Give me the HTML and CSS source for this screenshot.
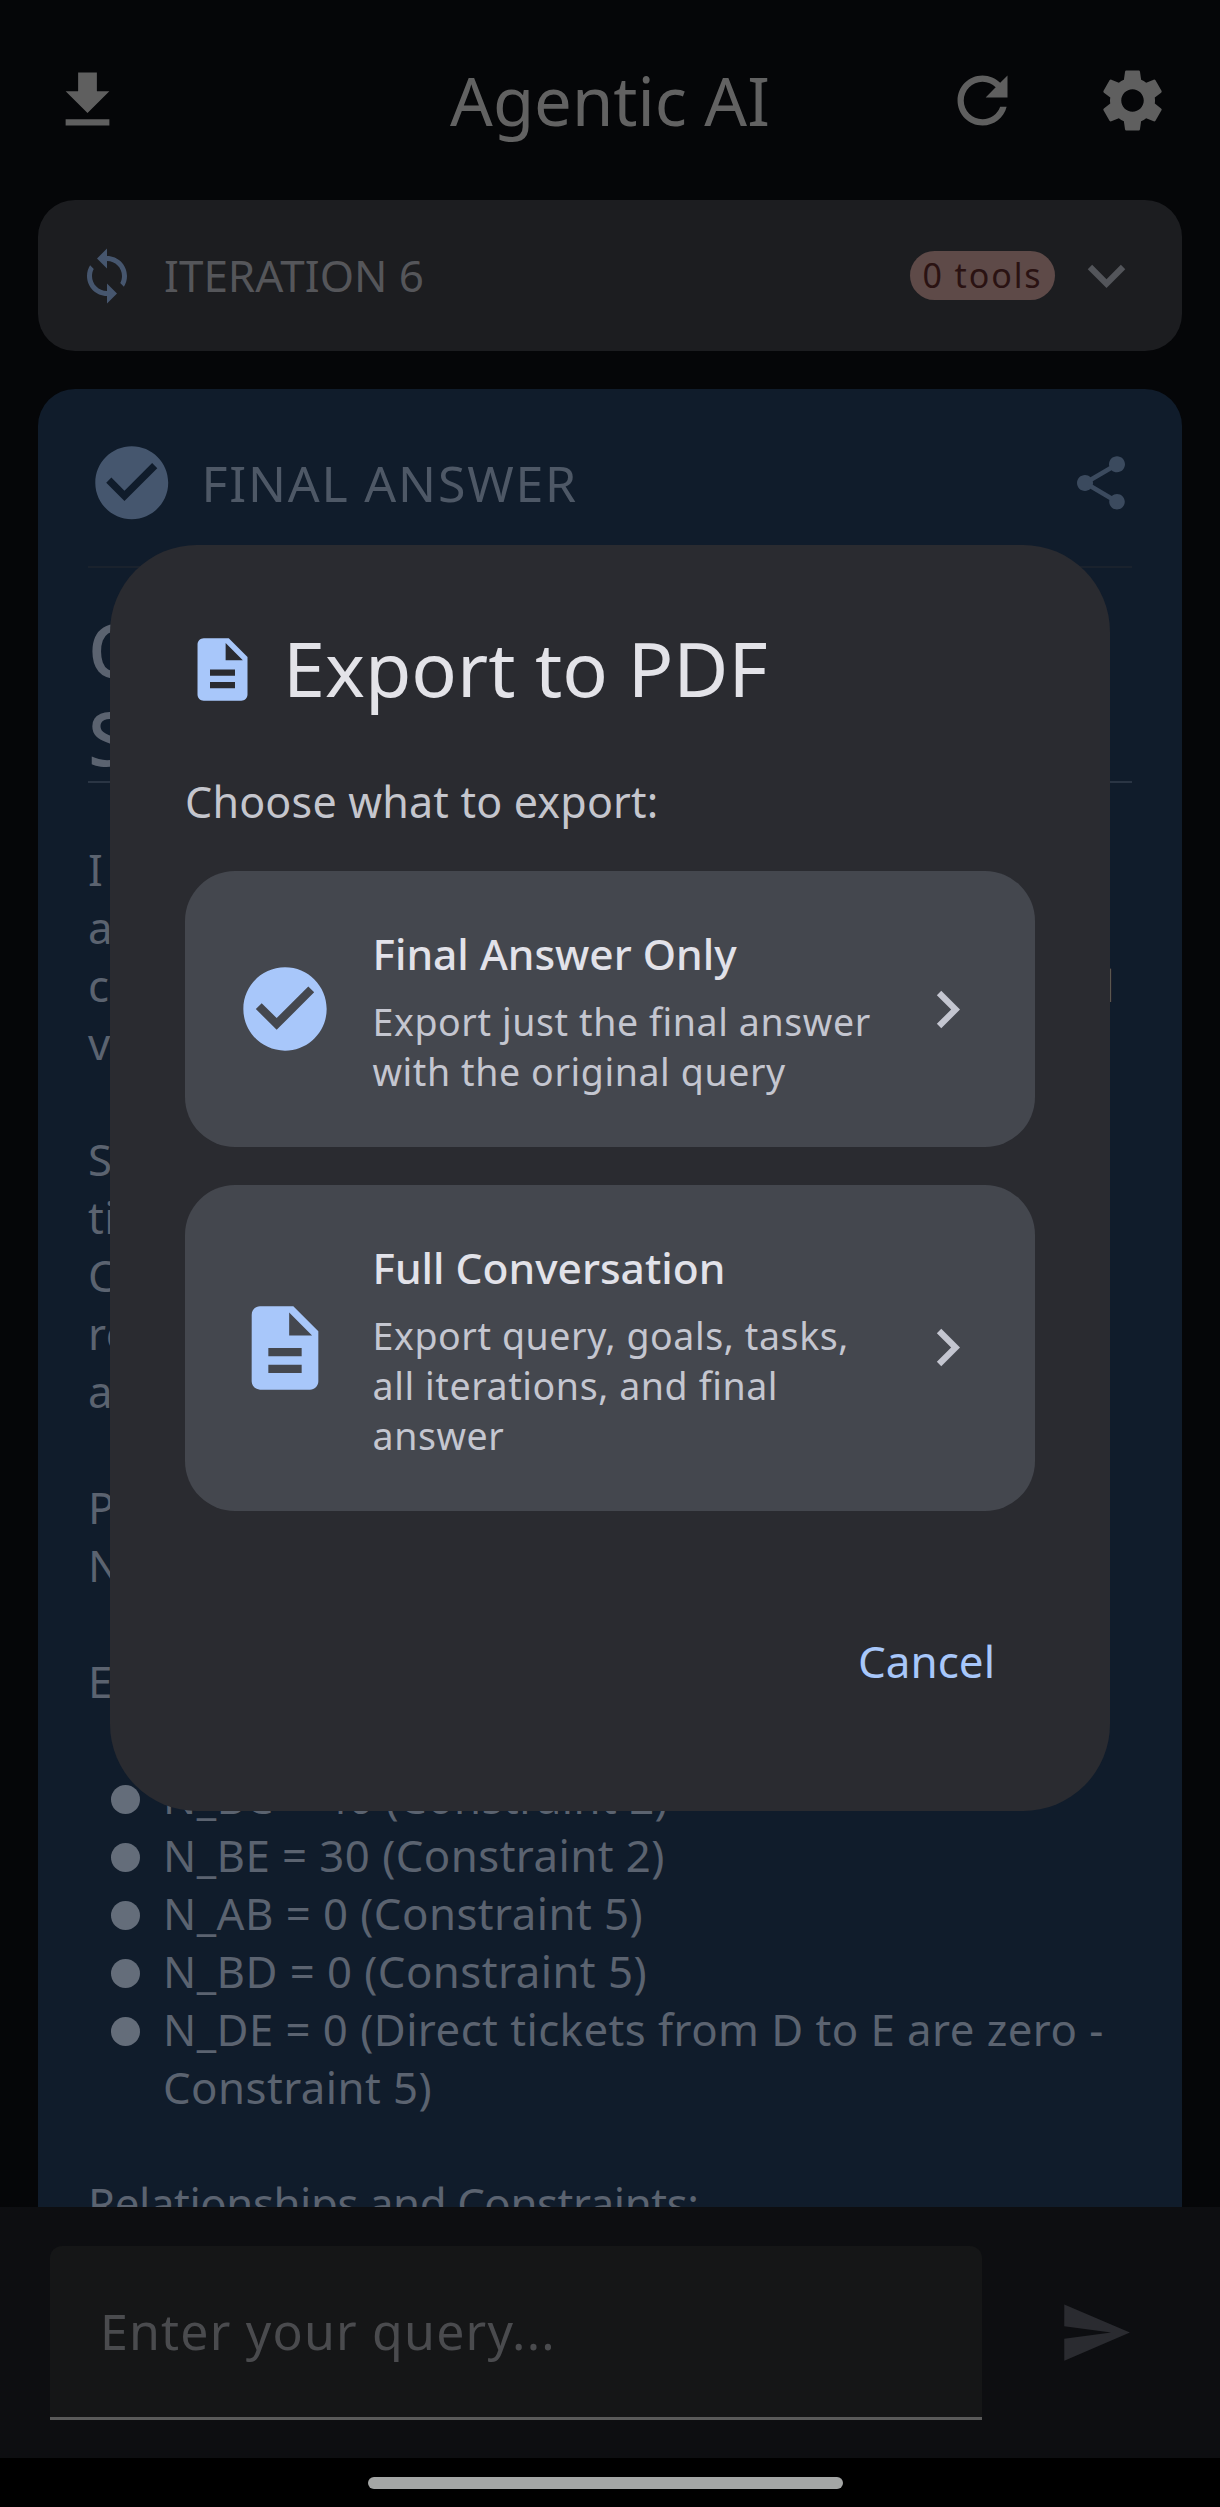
FILE: index.html
```html
<!DOCTYPE html>
<html lang="en">
<head>
<meta charset="utf-8">
<title>Agentic AI</title>
<link rel="stylesheet" href="styles.css">
</head>
<body>
<div class="screen">
  <main class="content">
    <header class="appbar">
      <div class="appbar-side">
        <svg class="icon-75 ic-head" viewBox="0 0 24 24"><path d="M19 9h-4V3H9v6H5l7 7 7-7zM5 18v2h14v-2H5z"/></svg>
      </div>
      <h1 class="app-title">Agentic AI</h1>
      <div class="appbar-side appbar-right">
        <svg class="icon-75 ic-head" viewBox="0 0 24 24"><path d="M17.65 6.35C16.2 4.9 14.21 4 12 4c-4.42 0-7.99 3.58-7.99 8s3.57 8 7.99 8c3.73 0 6.84-2.55 7.73-6h-2.08c-.82 2.33-3.04 4-5.65 4-3.31 0-6-2.69-6-6s2.69-6 6-6c1.66 0 3.14.69 4.22 1.78L13 11h7V4l-2.35 2.35z"/></svg>
        <svg class="icon-75 ic-head" viewBox="0 0 24 24"><path d="M19.14 12.94c.04-.3.06-.61.06-.94 0-.32-.02-.64-.07-.94l2.03-1.58c.18-.14.23-.41.12-.61l-1.92-3.32c-.12-.22-.37-.29-.59-.22l-2.39.96c-.5-.38-1.03-.7-1.62-.94l-.36-2.54c-.04-.24-.24-.41-.48-.41h-3.84c-.24 0-.43.17-.47.41l-.36 2.54c-.59.24-1.13.57-1.62.94l-2.39-.96c-.22-.08-.47 0-.59.22L2.74 8.87c-.12.21-.08.47.12.61l2.03 1.58c-.05.3-.09.63-.09.94s.02.64.07.94l-2.03 1.58c-.18.14-.23.41-.12.61l1.92 3.32c.12.22.37.29.59.22l2.39-.96c.5.38 1.03.7 1.62.94l.36 2.54c.05.24.24.41.48.41h3.84c.24 0 .44-.17.47-.41l.36-2.54c.59-.24 1.13-.56 1.62-.94l2.39.96c.22.08.47 0 .59-.22l1.92-3.32c.12-.22.07-.47-.12-.61l-2.01-1.58zM12 15.6c-1.98 0-3.6-1.62-3.6-3.6s1.62-3.6 3.6-3.6 3.6 1.62 3.6 3.6-1.62 3.6-3.6 3.6z"/></svg>
      </div>
    </header>

    <section class="iter-card">
      <svg class="icon-sync" viewBox="0 0 24 24"><path d="M12 4V1L8 5l4 4V6c3.31 0 6 2.69 6 6 0 1.01-.25 1.97-.7 2.8l1.46 1.46C19.54 15.03 20 13.57 20 12c0-4.42-3.58-8-8-8zm0 14c-3.31 0-6-2.69-6-6 0-1.01.25-1.97.7-2.8L5.24 7.74C4.46 8.97 4 10.43 4 12c0 4.42 3.58 8 8 8v3l4-4-4-4v3z"/></svg>
      <span class="iter-label">ITERATION 6</span>
      <span class="tools-pill">0 tools</span>
      <svg class="icon-75 ic-chev" viewBox="0 0 24 24"><path d="M16.59 8.59 12 13.17 7.41 8.59 6 10l6 6 6-6z"/></svg>
    </section>

    <section class="answer-card">
      <div class="answer-head">
        <svg class="icon-check" viewBox="0 0 24 24"><path d="M12 2C6.48 2 2 6.48 2 12s4.48 10 10 10 10-4.48 10-10S17.52 2 12 2zm-2 15l-5-5 1.41-1.41L10 14.17l7.59-7.59L19 8l-9 9z"/></svg>
        <span class="answer-label">FINAL ANSWER</span>
        <svg class="icon-share" viewBox="0 0 24 24"><path d="M18 16.08c-.76 0-1.44.3-1.96.77L8.91 12.7c.05-.23.09-.46.09-.7s-.04-.47-.09-.7l7.05-4.11c.54.5 1.25.81 2.04.81 1.66 0 3-1.34 3-3s-1.34-3-3-3-3 1.34-3 3c0 .24.04.47.09.7L8.04 9.81C7.5 9.31 6.79 9 6 9c-1.66 0-3 1.34-3 3s1.34 3 3 3c.79 0 1.5-.31 2.04-.81l7.12 4.16c-.05.21-.08.43-.08.65 0 1.61 1.31 2.92 2.92 2.92 1.61 0 2.92-1.31 2.92-2.92s-1.31-2.92-2.92-2.92z"/></svg>
      </div>
      <div class="rule-dark"></div>
      <h2 class="answer-title">O<br>S</h2>
      <div class="rule-light"></div>
      <div class="answer-body">
        <p class="para">I<br>a<br><span class="split-line"><span>c</span><span>l</span></span>v</p>
        <p class="para">S<br>ti<br>C<br>re<br>a</p>
        <p class="para">P<br>N</p>
        <p class="para">E</p>
        <ul class="bullets">
          <li>N_BC = 40 (Constraint 2)</li>
          <li>N_BE = 30 (Constraint 2)</li>
          <li>N_AB = 0 (Constraint 5)</li>
          <li>N_BD = 0 (Constraint 5)</li>
          <li>N_DE = 0 (Direct tickets from D to E are zero - Constraint 5)</li>
        </ul>
        <p class="para para-tight">Relationships and Constraints:</p>
      </div>
    </section>
  </main>

  <footer class="composer">
    <div class="query-field">Enter your query...</div>
    <svg class="icon-75 ic-send" viewBox="0 0 24 24"><path d="M2.01 21 23 12 2.01 3 2 10l15 2-15 2z"/></svg>
  </footer>
  <div class="navbar"><div class="nav-pill"></div></div>

  <div class="dialog">
    <div class="dialog-head">
      <svg class="icon-75 ic-blue" viewBox="0 0 24 24"><path d="M14 2H6c-1.1 0-1.99.9-1.99 2L4 20c0 1.1.89 2 1.99 2H18c1.1 0 2-.9 2-2V8l-6-6zm2 16H8v-2h8v2zm0-4H8v-2h8v2zm-3-5V3.5L18.5 9H13z"/></svg>
      <h2 class="dialog-title">Export to PDF</h2>
    </div>
    <p class="dialog-sub">Choose what to export:</p>
    <div class="option">
      <svg class="icon-100 ic-blue" viewBox="0 0 24 24"><path d="M12 2C6.48 2 2 6.48 2 12s4.48 10 10 10 10-4.48 10-10S17.52 2 12 2zm-2 15l-5-5 1.41-1.41L10 14.17l7.59-7.59L19 8l-9 9z"/></svg>
      <div class="option-text">
        <div class="option-title">Final Answer Only</div>
        <div class="option-desc">Export just the final answer with the original query</div>
      </div>
      <svg class="icon-75 ic-arrow" viewBox="0 0 24 24"><path d="M10 6 8.59 7.41 13.17 12l-4.58 4.59L10 18l6-6z"/></svg>
    </div>
    <div class="option">
      <svg class="icon-100 ic-blue" viewBox="0 0 24 24"><path d="M14 2H6c-1.1 0-1.99.9-1.99 2L4 20c0 1.1.89 2 1.99 2H18c1.1 0 2-.9 2-2V8l-6-6zm2 16H8v-2h8v2zm0-4H8v-2h8v2zm-3-5V3.5L18.5 9H13z"/></svg>
      <div class="option-text">
        <div class="option-title">Full Conversation</div>
        <div class="option-desc">Export query, goals, tasks, all iterations, and final answer</div>
      </div>
      <svg class="icon-75 ic-arrow" viewBox="0 0 24 24"><path d="M10 6 8.59 7.41 13.17 12l-4.58 4.59L10 18l6-6z"/></svg>
    </div>
    <div class="dialog-actions"><span class="cancel">Cancel</span></div>
  </div>
</div>
</body>
</html>
```

FILE: styles.css
```css
* { box-sizing: border-box; }
html, body { margin: 0; padding: 0; background: #000; }
body { font-family: "Noto Sans", sans-serif; }
h1, h2, p, ul { margin: 0; padding: 0; font-weight: 400; }
svg { display: block; flex: none; fill: currentColor; }

.screen { position: relative; width: 1220px; height: 2507px; overflow: hidden; display: flex; flex-direction: column; background: #050608; }
.content { height: 2207px; overflow: hidden; padding: 0 38px; }

.icon-75 { width: 75px; height: 75px; }
.icon-100 { width: 100px; height: 100px; }

.appbar { display: grid; grid-template-columns: 1fr auto 1fr; align-items: center; height: 200px; margin: 0 -38px; padding: 0 50px; }
.appbar-side { display: flex; gap: 75px; }
.appbar-right { justify-content: flex-end; }
.ic-head { color: #5f5f5f; }
.app-title { font-size: 67px; line-height: 1; color: #626262; }

.iter-card { height: 151px; border-radius: 37px; background: #1c1d20; display: flex; align-items: center; padding: 0 38px 0 39px; margin-bottom: 38px; }
.icon-sync { width: 60px; height: 60px; color: #46566e; }
.iter-label { flex: 1; margin-left: 27px; font-size: 44px; line-height: 60px; margin-top: -2px; color: #55565a; }
.tools-pill { width: 145px; height: 49px; border-radius: 25px; background: #5e4a48; color: #2a1212; font-size: 34px; line-height: 49px; text-align: center; letter-spacing: 1.9px; }
.ic-chev { color: #53555a; margin-left: 14px; }

.answer-card { height: 1900px; border-radius: 37px 37px 0 0; background: #101c2b; padding: 0 50px; color: #5b6370; }
.answer-head { display: flex; align-items: center; height: 187px; }
.icon-check { width: 87.5px; height: 87.5px; color: #45566e; }
.answer-label { flex: 1; margin-left: 26px; font-size: 50px; letter-spacing: 1.8px; color: #4e5866; }
.icon-share { width: 64px; height: 64px; color: #3b4a5e; margin-right: -1px; }
.rule-dark { height: 2px; background: #1a222d; margin-top: -10px; }
.answer-title { font-size: 75px; font-weight: 500; line-height: 88px; margin-top: 37px; color: #5b6370; }
.rule-light { height: 2px; background: #2a3544; }
.answer-body { font-size: 43.75px; line-height: 58px; letter-spacing: .45px; margin-top: 57px; }
.para { margin-bottom: 58px; }
.para-tight { letter-spacing: -.42px; }
.split-line { display: flex; justify-content: space-between; padding-right: 17px; }
.bullets { list-style: none; margin-bottom: 58px; }
.bullets li { position: relative; padding-left: 75px; }
.bullets li::before { content: ""; position: absolute; left: 23px; top: 17px; width: 29px; height: 29px; border-radius: 50%; background: #646d7a; }

.composer { height: 251px; background: #0d0e11; display: flex; align-items: center; padding: 0 50px; gap: 77px; }
.query-field { width: 932px; height: 174px; background: #151617; border-radius: 12px 12px 0 0; border-bottom: 3px solid #5a5a5a; padding: 0 50px; font-size: 50px; line-height: 171px; letter-spacing: 1.2px; color: #4a4b4e; }
.ic-send { color: #2a2b30; margin-left: -1px; }
.navbar { flex: 1; background: #000; display: flex; justify-content: center; padding-top: 19px; padding-right: 9px; }
.nav-pill { width: 475px; height: 12px; border-radius: 6px; background: #a4a6a5; }

.dialog { position: absolute; left: 110px; top: 545px; width: 1000px; height: 1266px; border-radius: 87px; background: #2a2b30; padding: 75px; display: flex; flex-direction: column; }
.dialog-head { display: flex; align-items: center; gap: 23px; }
.ic-blue { color: #a8c7fa; }
.dialog-title { font-size: 75.5px; line-height: 100px; color: #e3e3e8; margin-top: -2px; }
.dialog-sub { font-size: 43px; line-height: 62px; color: #c5c6cd; margin-top: 53px; letter-spacing: .2px; }
.option { display: flex; align-items: center; border-radius: 50px; background: #44474e; padding: 50px; gap: 37.5px; margin-top: 37.5px; }
.dialog-sub + .option { margin-top: 38px; }
.option-text { flex: 1; }
.option-title { font-size: 42.5px; font-weight: 500; line-height: 66px; color: #e2e2e9; margin-bottom: 10px; }
.option-desc { font-size: 37.5px; line-height: 50px; letter-spacing: .6px; color: #c4c6d0; }
.ic-arrow { color: #c4c6d0; margin-left: -20px; }
.dialog-actions { display: flex; justify-content: flex-end; margin-top: auto; padding-right: 40px; }
.cancel { font-size: 44px; line-height: 60px; color: #a8c7fa; position: relative; top: -45px; }
```
